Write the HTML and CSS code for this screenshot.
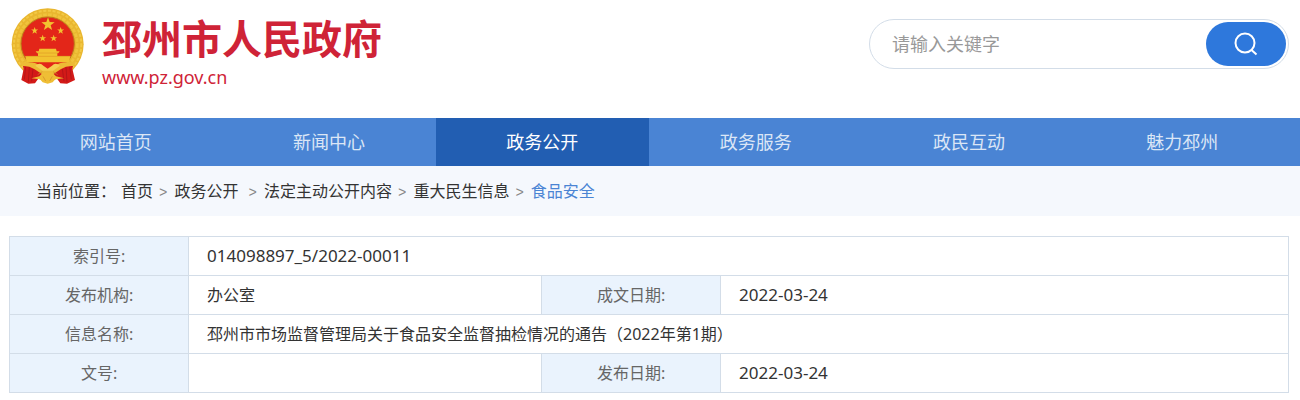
FILE: index.html
```
<!DOCTYPE html>
<html lang="zh-CN">

<head>
    <meta charset="UTF-8">
    <meta name="viewport" content="width=device-width, initial-scale=1.0">
    <title>邳州市人民政府</title>
    <link rel="stylesheet" href="styles.css">
</head>

<body>
    <!-- logo and search -->
    <header class="header">
        <a class="brand" href="#">
            <svg class="emblem" viewBox="32 24 222 228" aria-hidden="true">
                <defs>
                    <path id="star" d="M0-10 2.4-3.2 9.5-3.1 3.8 1.2 5.9 8.1 0 4-5.9 8.1-3.8 1.2-9.5-3.1-2.4-3.2z" />
                </defs>
                <circle cx="142" cy="133" r="108" fill="#e9b62f" />
                <circle cx="142" cy="133" r="101" fill="none" stroke="#f3c945" stroke-width="6" stroke-dasharray="9 5" />
                <circle cx="142" cy="133" r="89" fill="none" stroke="#f0c33c" stroke-width="8" stroke-dasharray="11 4" />
                <circle cx="142" cy="131" r="80" fill="#e32619" stroke="#bd7b1c" stroke-width="3" />
                <g fill="#f2c230">
                    <use href="#star" transform="translate(143 73) scale(2.1)" />
                    <use href="#star" transform="translate(103 92) scale(1.1)" />
                    <use href="#star" transform="translate(181 92) scale(1.1)" />
                    <use href="#star" transform="translate(127 115) scale(1.1)" />
                    <use href="#star" transform="translate(160 115) scale(1.1)" />
                    <path d="M117 146h50l2 8h9l-4 5h-3v9h39l-4 19H79l-4-19h38v-9h-3l-4-5h9z" />
                </g>
                <path d="M110 159h64M75 169h135" stroke="#e09a24" stroke-width="2" />
                <path d="M66 190q24-3 46 8l30 10 30-10q22-11 48-8l-4 16 8 34-24 11-20-1-14-20h-48l-14 20-20 1-21-11 7-34z" fill="#d31a18" />
                <path d="M76 200l-4 38M87 202l-3 44M98 206l-4 38M208 200l5 38M197 202l3 44M186 206l5 38" stroke="#a81216" stroke-width="2" />
                <path d="M56 183q12 5 23 4 29-1 44 13l19 9 19-9q15-14 44-13 12 1 23-4l-9 15q-20-2-38 10l-26 17h-26l-26-17q-18-12-38-10z" fill="#edbb35" />
                <path d="M105 197q14-12 24 0l13 9 13-9q10-12 24 0l-21 15h-32z" fill="#f5cf52" />
                <path d="M93 235l24-6 10-10h30l10 10 24 6-26 3-8 9-15 4-15-4-8-9z" fill="#efbe35" />
                <path d="M112 224l14-9M172 224l-14-9M128 229l8 14M156 229l-8 14" stroke="#d08a25" stroke-width="2" />
            </svg>
            <span class="brand-text">
                <strong class="brand-name">邳州市人民政府</strong>
                <span class="brand-url">www.pz.gov.cn</span>
            </span>
        </a>

        <form class="search">
            <input class="search-input" type="text" aria-label="请输入关键字" placeholder="请输入关键字">
            <button class="search-button" type="submit" aria-label="搜索">
                <svg class="search-icon" viewBox="0 0 24 24" aria-hidden="true">
                    <circle cx="11" cy="11" r="9.5" />
                    <path d="M17.5 18l5 4.5" />
                </svg>
            </button>
        </form>
    </header>

    <!-- main menu -->
    <nav class="nav">
        <a href="#">网站首页</a>
        <a href="#">新闻中心</a>
        <a class="active" href="#">政务公开</a>
        <a href="#">政务服务</a>
        <a href="#">政民互动</a>
        <a href="#">魅力邳州</a>
    </nav>

    <!-- breadcrumb -->
    <div class="crumbs">
        <span class="crumbs-label">当前位置：</span>
        <a href="#">首页</a>
        <span class="sep">&gt;</span>
        <a href="#">政务公开&nbsp;</a>
        <span class="sep">&gt;</span>
        <a href="#">法定主动公开内容</a>
        <span class="sep">&gt;</span>
        <a href="#">重大民生信息</a>
        <span class="sep">&gt;</span>
        <a class="current" href="#">食品安全</a>
    </div>

    <!-- document info -->
    <main class="content">
        <table class="info">
            <colgroup>
                <col class="col-label">
                <col class="col-value">
                <col class="col-label">
                <col>
            </colgroup>
            <tr>
                <th scope="row">索引号:</th>
                <td class="num" colspan="3">014098897_5/2022-00011</td>
            </tr>
            <tr>
                <th scope="row">发布机构:</th>
                <td>办公室</td>
                <th scope="row">成文日期:</th>
                <td class="num">2022-03-24</td>
            </tr>
            <tr>
                <th scope="row">信息名称:</th>
                <td colspan="3">邳州市市场监督管理局关于食品安全监督抽检情况的通告（2022年第1期）</td>
            </tr>
            <tr>
                <th scope="row">文号:</th>
                <td></td>
                <th scope="row">发布日期:</th>
                <td class="num">2022-03-24</td>
            </tr>
        </table>
    </main>
</body>

</html>
```
FILE: styles.css
```
* {
    box-sizing: border-box;
}

body {
    margin: 0;
    background: #fff;
    color: #333;
    font-family: "Noto Sans", "Noto Sans CJK SC", sans-serif;
    font-size: 16px;
    line-height: 24px;
}

a {
    color: inherit;
    text-decoration: none;
}

.header {
    display: flex;
    justify-content: space-between;
    align-items: flex-start;
    min-height: 118px;
    padding: 8px 11px 0;
}

.brand {
    display: flex;
    gap: 17px;
    color: #cf2337;
}

.emblem {
    width: 74px;
    height: 76px;
}

.brand-text {
    display: flex;
    flex-direction: column;
    gap: 2px;
    padding-top: 7px;
}

.brand-name {
    font-size: 40px;
    line-height: 48px;
}

.brand-url {
    font-size: 18px;
    line-height: 24px;
}

.search {
    display: flex;
    width: 420px;
    height: 50px;
    margin-top: 11px;
    padding: 2px;
    border: 1px solid #d3dde8;
    border-radius: 25px;
}

.search-input {
    flex: 1;
    min-width: 0;
    padding: 0 20px;
    border: none;
    outline: none;
    background: transparent;
    font-family: inherit;
    font-size: 18px;
}

.search-input::placeholder {
    color: #999;
}

.search-button {
    display: flex;
    align-items: center;
    justify-content: center;
    width: 80px;
    padding: 0;
    border: none;
    border-radius: 22px;
    background: #2e78dc;
    cursor: pointer;
}

.search-icon {
    width: 24px;
    height: 24px;
    fill: none;
    stroke: #fff;
    stroke-width: 2;
}

.nav {
    display: flex;
    padding: 0 11px 0 9px;
    background: #4a84d4;
}

.nav a {
    flex: 1;
    color: #dbe6f6;
    font-size: 18px;
    line-height: 48px;
    text-align: center;
}

.nav a:hover,
.nav .active {
    background: #225eb2;
    color: #fff;
}

.crumbs {
    display: flex;
    align-items: baseline;
    min-height: 50px;
    padding: 13px 36px 11px;
    background: #f5f8fd;
}

.crumbs-label {
    margin-right: 5px;
}

.sep {
    margin: 0 7px 0 6px;
    color: #888;
    font-family: "Liberation Mono", monospace;
    font-size: 14px;
}

.current {
    color: #4a84d4;
}

.content {
    padding: 20px 11px 0 9px;
}

.info {
    width: 100%;
    border-collapse: collapse;
    table-layout: fixed;
}

.col-label {
    width: 14%;
}

.col-value {
    width: 27.6%;
}

.info th,
.info td {
    height: 39px;
    padding: 0 18px;
    border: 1px solid #d3dde8;
    text-align: left;
}

.info th {
    background: #eaf3fd;
    color: #666;
    font-weight: normal;
    text-align: center;
}

.info .num {
    font-size: 17px;
}
```
